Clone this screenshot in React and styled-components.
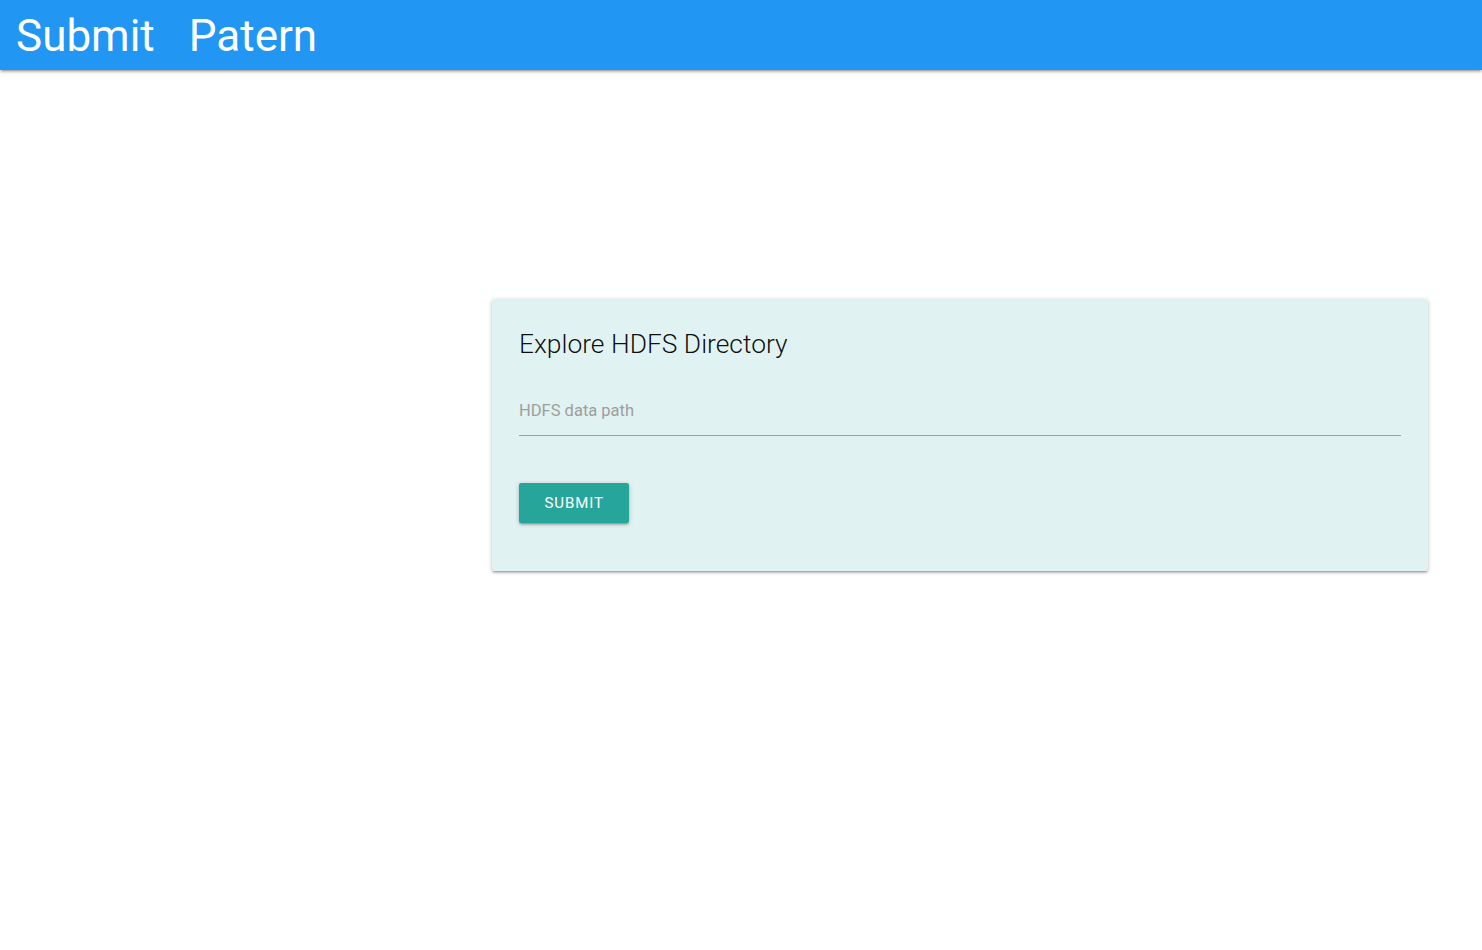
import React, { useState } from "react";
import styled, { createGlobalStyle } from "styled-components";

const GlobalStyle = createGlobalStyle`
  body {
    margin: 0;
    background: #ffffff;
    font-family: Roboto, "Liberation Sans", sans-serif;
  }
  * {
    box-sizing: border-box;
  }
`;

const AppBar = styled.nav`
  display: flex;
  align-items: center;
  height: 70px;
  padding: 2px 16px 0;
  gap: 34px;
  background-color: #2196f3;
  box-shadow: 0 2px 2px 0 rgba(0, 0, 0, 0.14), 0 3px 1px -2px rgba(0, 0, 0, 0.12),
    0 1px 5px 0 rgba(0, 0, 0, 0.2);
`;

const NavTitle = styled.a`
  color: #ffffff;
  font-size: 44px;
  font-weight: 400;
  line-height: 68px;
  text-decoration: none;
  cursor: pointer;
`;

const Main = styled.main`
  display: flex;
  justify-content: flex-end;
  padding: 229px 54px 40px 0;
`;

const Card = styled.section`
  width: 936px;
  padding: 24px 27px 48px;
  background-color: #e0f2f1;
  border-radius: 2px;
  box-shadow: 0 2px 2px 0 rgba(0, 0, 0, 0.14), 0 3px 1px -2px rgba(0, 0, 0, 0.12),
    0 1px 5px 0 rgba(0, 0, 0, 0.2);
`;

const CardTitle = styled.h2`
  margin: 0;
  font-size: 26.4px;
  font-weight: 300;
  line-height: 42px;
  color: rgba(0, 0, 0, 0.95);
`;

const Field = styled.div`
  margin-top: 29px;
`;

const TextInput = styled.input`
  display: block;
  width: 100%;
  height: 42px;
  padding: 0 0 8px;
  font-family: inherit;
  font-size: 16.5px;
  color: rgba(0, 0, 0, 0.87);
  background: transparent;
  border: none;
  border-bottom: 1px solid #9e9e9e;
  outline: none;

  &::placeholder {
    color: #9e9e9e;
  }
  &:focus {
    border-bottom-color: #26a69a;
  }
`;

const SubmitButton = styled.button`
  display: inline-block;
  margin-top: 47px;
  height: 40px;
  padding: 0 25.5px;
  font-family: inherit;
  font-size: 15px;
  letter-spacing: 0.9px;
  text-transform: uppercase;
  color: #ffffff;
  background-color: #26a69a;
  border: none;
  border-radius: 2px;
  cursor: pointer;
  box-shadow: 0 2px 2px 0 rgba(0, 0, 0, 0.14), 0 3px 1px -2px rgba(0, 0, 0, 0.12),
    0 1px 5px 0 rgba(0, 0, 0, 0.2);
`;

const App = () => {
  const [path, setPath] = useState("");

  const handleSubmit = (e) => {
    e.preventDefault();
  };

  return (
    <>
      <GlobalStyle />
      <AppBar>
        <NavTitle>Submit</NavTitle>
        <NavTitle>Patern</NavTitle>
      </AppBar>
      <Main>
        <Card>
          <CardTitle>Explore HDFS Directory</CardTitle>
          <form onSubmit={handleSubmit}>
            <Field>
              <TextInput
                name="path"
                placeholder="HDFS data path"
                value={path}
                onChange={(e) => setPath(e.target.value)}
              />
            </Field>
            <SubmitButton type="submit">Submit</SubmitButton>
          </form>
        </Card>
      </Main>
    </>
  );
};

export default App;
